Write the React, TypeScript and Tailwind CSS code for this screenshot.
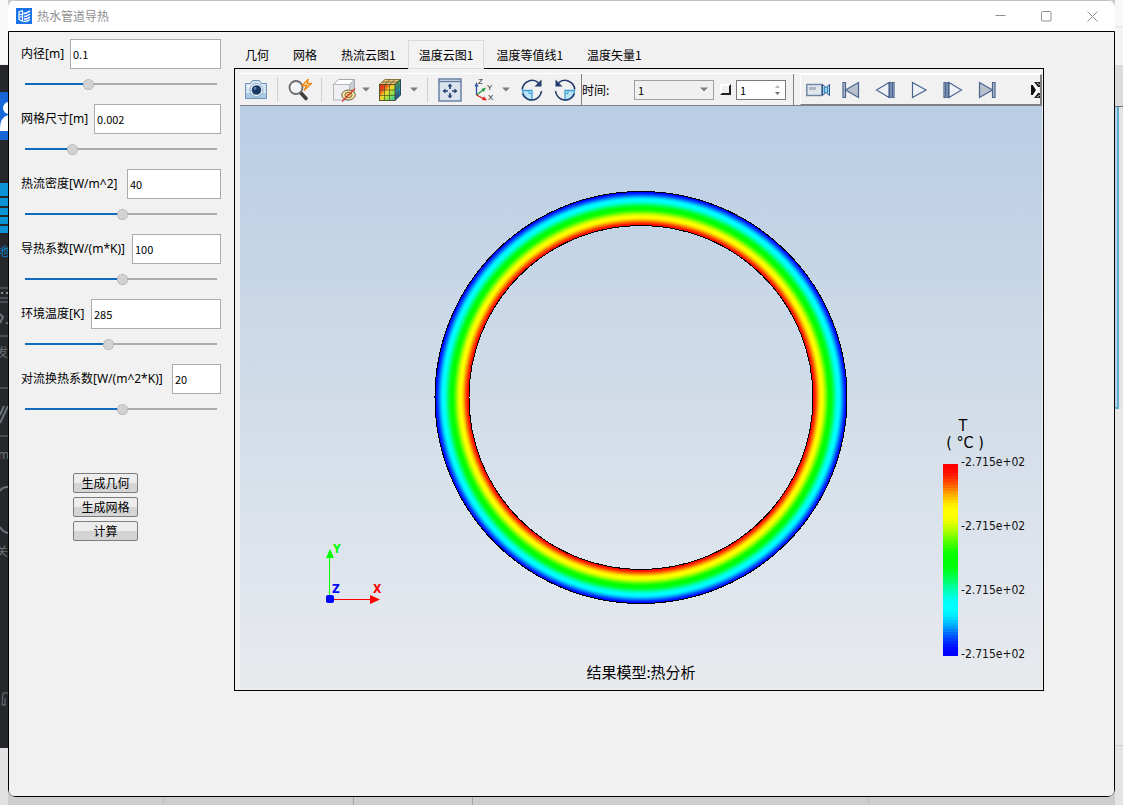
import { useState } from 'react';
import type { ReactNode } from 'react';

interface Param {
  id: string;
  label: string;
  value: string;
  percent: number;
  inputWidth: string;
}

const PARAMS: Param[] = [
  { id: 'inner', label: '内径[m]', value: '0.1', percent: 32, inputWidth: 'w-[151px]' },
  { id: 'mesh', label: '网格尺寸[m]', value: '0.002', percent: 23, inputWidth: 'w-[127px]' },
  { id: 'flux', label: '热流密度[W/m^2]', value: '40', percent: 51, inputWidth: 'w-[94px]' },
  { id: 'conduct', label: '导热系数[W/(m*K)]', value: '100', percent: 51, inputWidth: 'w-[89px]' },
  { id: 'ambient', label: '环境温度[K]', value: '285', percent: 43, inputWidth: 'w-[130px]' },
  { id: 'convect', label: '对流换热系数[W/(m^2*K)]', value: '20', percent: 51, inputWidth: 'w-[49px]' },
];

const TABS = ['几何', '网格', '热流云图1', '温度云图1', '温度等值线1', '温度矢量1'];
const ACTIONS = ['生成几何', '生成网格', '计算'];
const LEGEND = ['-2.715e+02', '-2.715e+02', '-2.715e+02', '-2.715e+02'];

// red -> yellow -> green -> cyan -> blue
const RAMP = [
  [255, 0, 0],
  [255, 255, 0],
  [0, 255, 0],
  [0, 255, 255],
  [0, 0, 255],
];

function rampColor(t: number) {
  const pos = Math.min(Math.max(t, 0), 0.9999) * 4;
  const i = Math.floor(pos);
  const f = pos - i;
  const s = f * f * (3 - 2 * f);
  const [r, g, b] = RAMP[i].map((c, k) => Math.round(c + (RAMP[i + 1][k] - c) * s));
  return `rgb(${r},${g},${b})`;
}

function ParamField({ param }: { param: Param }) {
  const [value, setValue] = useState(param.value);
  const [percent, setPercent] = useState(param.percent);

  return (
    <div className="flex flex-col pb-[19px]">
      <div className="flex items-center">
        <label htmlFor={param.id} className="flex-1 font-['Noto_Sans','Noto_Sans_CJK_SC',sans-serif] whitespace-nowrap">
          {param.label}
        </label>
        <input
          id={param.id}
          type="text"
          value={value}
          onChange={(e) => setValue(e.target.value)}
          className={`${param.inputWidth} h-[30px] border border-[#ababab] bg-white px-0.5 text-[11px] outline-none`}
        />
      </div>
      <input
        type="range"
        aria-label={param.label}
        min={0}
        max={100}
        value={percent}
        onChange={(e) => setPercent(Number(e.target.value))}
        style={{
          backgroundImage: `linear-gradient(to right, #0f6cbd ${percent}%, #ababab ${percent}%)`,
        }}
        className="mx-1 mt-[14px] h-0.5 appearance-none outline-none [&::-webkit-slider-thumb]:h-[11px] [&::-webkit-slider-thumb]:w-[11px] [&::-webkit-slider-thumb]:appearance-none [&::-webkit-slider-thumb]:rounded-full [&::-webkit-slider-thumb]:border [&::-webkit-slider-thumb]:border-dotted [&::-webkit-slider-thumb]:border-[#a0a0a0] [&::-webkit-slider-thumb]:bg-[#d2d2d2]"
      />
    </div>
  );
}

function ToolButton({ label, width, children }: { label: string; width: string; children: ReactNode }) {
  return (
    <button type="button" aria-label={label} className={`${width} flex h-full shrink-0 items-center justify-center`}>
      {children}
    </button>
  );
}

function Caret() {
  return (
    <svg width="8" height="5" viewBox="0 0 8 5">
      <path d="M0 0.5H8L4 4.5Z" fill="#7f7f7f" />
    </svg>
  );
}

function AppLogo() {
  return (
    <svg width="16" height="16" viewBox="0 0 16 16">
      <rect width="16" height="16" fill="#1a73e8" />
      <path
        d="M2.500 4L7 2.500M3 4V11.500L7 13.500M6.500 3V13M3 6.500H6.500M3 9H6.500"
        fill="none"
        stroke="#fff"
        strokeWidth="1.200"
      />
      <path
        d="M7.500 5.500Q10.500 5.500 14 2.800M8 8.500Q11 8.500 14 6M8 11.200Q11 11.200 14 8.800M7.500 13.500Q11 13.800 14 11.500"
        fill="none"
        stroke="#fff"
        strokeWidth="1.500"
      />
    </svg>
  );
}

function CameraIcon() {
  return (
    <svg width="24" height="24" viewBox="0 0 24 24">
      <path d="M1.500 5.500H6.500L8.500 2.500H15.500L17.500 5.500H22.500V20.500H1.500Z" fill="#d5e5f4" stroke="#6f93b8" />
      <path d="M2 15H22V20H2Z" fill="#a9c8e4" />
      <rect x="3" y="7" width="3" height="2" fill="#fff" />
      <circle cx="12.500" cy="12" r="6.500" fill="#f4f8fc" stroke="#8faccb" />
      <circle cx="12.500" cy="12" r="4.800" fill="#1d3a69" />
      <circle cx="11" cy="10.500" r="1.400" fill="#5d80ad" />
    </svg>
  );
}

function MagnifierIcon() {
  return (
    <svg width="24" height="24" viewBox="0 0 24 24">
      <path d="M12.500 14.500L18 20.500" stroke="#3d3d3d" strokeWidth="3.600" strokeLinecap="round" />
      <circle cx="8" cy="9.500" r="6.500" fill="#f0f4f7" stroke="#6b6b6b" strokeWidth="1.800" />
      <path d="M4.500 9Q5 5.800 8 5.600" fill="none" stroke="#fff" strokeWidth="1.500" />
      <path d="M20.500 1L14 7.500H18.500L16 12.500L23.500 5.500H19Z" fill="#ffe7b0" stroke="#ee8a1d" strokeWidth="1.300" />
    </svg>
  );
}

function HiddenCubeIcon() {
  return (
    <svg width="24" height="24" viewBox="0 0 24 24">
      <path d="M1.500 6.500L6.500 1.500H22.500L17.500 6.500Z" fill="#fff" stroke="#a5a9ae" />
      <path d="M17.500 6.500L22.500 1.500V16.500L17.500 22Z" fill="#c9ced4" stroke="#a5a9ae" />
      <rect x="1.500" y="6.500" width="16" height="15.500" fill="#eef0f3" stroke="#b4b8bd" />
      <ellipse cx="16.500" cy="17" rx="6.800" ry="5" fill="#f6e2aa" stroke="#6d6346" />
      <ellipse cx="16.500" cy="17" rx="3.600" ry="2.800" fill="#e0c478" stroke="#8a7441" />
      <path d="M10 23.500L23 10.500" stroke="#dd3a2d" strokeWidth="1.300" />
    </svg>
  );
}

function ContourCubeIcon() {
  return (
    <svg width="24" height="24" viewBox="0 0 24 24">
      <defs>
        <linearGradient id="cubeFront" x1="0" y1="0" x2="1" y2="1">
          <stop offset="0.050" stopColor="#e8261a" />
          <stop offset="0.250" stopColor="#f0481c" />
          <stop offset="0.450" stopColor="#f8d92c" />
          <stop offset="0.700" stopColor="#8be04a" />
          <stop offset="1" stopColor="#21c3de" />
        </linearGradient>
        <linearGradient id="cubeSide" x1="0" y1="0" x2="0" y2="1">
          <stop offset="0" stopColor="#4fae3a" />
          <stop offset="0.500" stopColor="#2396c8" />
          <stop offset="1" stopColor="#1832ab" />
        </linearGradient>
      </defs>
      <path d="M1.500 6.500L7 1.500H22.500L17 6.500Z" fill="#f0c078" stroke="#8a7440" />
      <path d="M17 6.500L22.500 1.500V17L17 22.500Z" fill="url(#cubeSide)" stroke="#234c57" />
      <rect x="1.500" y="6.500" width="15.500" height="16" fill="url(#cubeFront)" stroke="#5d5420" />
      <path
        d="M6.500 6.500V22.500M11.500 6.500V22.500M1.500 12H17L22.500 7M1.500 17.500H17L22.500 12M6.500 6.500L12 1.500M11.500 6.500L17 1.500M4 4H20V20"
        fill="none"
        stroke="#4c5424"
        strokeWidth="0.700"
      />
    </svg>
  );
}

function FitIcon() {
  return (
    <svg width="24" height="24" viewBox="0 0 24 24">
      <rect x="1" y="1" width="22" height="22" fill="#dbe3ee" stroke="#60799e" strokeWidth="1.400" />
      <path d="M1 3.500H23" stroke="#60799e" strokeWidth="1.400" />
      <path d="M12 8V11M12 15V18M7 13H10M14 13H17" stroke="#243f6e" strokeWidth="1.600" />
      <path d="M12 5.500L14.500 8.500H9.500ZM12 20.500L14.500 17.500H9.500ZM4.500 13L7.500 10.500V15.500ZM19.500 13L16.500 10.500V15.500Z" fill="#243f6e" />
    </svg>
  );
}

function AxesIcon() {
  return (
    <svg width="24" height="24" viewBox="0 0 24 24" fontFamily="'Liberation Sans', sans-serif" fontSize="8">
      <path d="M3.500 17V7" stroke="#2c50a5" strokeWidth="1.300" />
      <path d="M3.500 4L5.500 8.500H1.500Z" fill="#2c50a5" />
      <path d="M3.500 17L10 12" stroke="#249a41" strokeWidth="1.300" />
      <path d="M13 9.500L10.800 14L8.300 11Z" fill="#249a41" />
      <path d="M3.500 17L10 20.500" stroke="#dc2020" strokeWidth="1.300" />
      <path d="M14 22.500L9 22L11 18.300Z" fill="#dc2020" />
      <text x="5" y="6" fill="#222">Z</text>
      <text x="14" y="12" fill="#222">Y</text>
      <text x="15" y="22" fill="#222">X</text>
    </svg>
  );
}

function RotateIcon({ flipped }: { flipped?: boolean }) {
  return (
    <svg width="24" height="24" viewBox="0 0 24 24">
      <g transform={flipped ? 'matrix(-1 0 0 1 24 0)' : undefined}>
        <path d="M12 12.500V22A9.500 9.500 0 0 1 2.500 12.500Z" fill="#bfe4f7" stroke="#3da0d2" strokeWidth="1.300" />
        <path d="M9 12.500V15.500H12" fill="none" stroke="#3da0d2" />
        <path d="M18.500 4.800A9.800 9.800 0 0 0 2.300 11.500M2.500 15.500A9.800 9.800 0 0 0 21.500 13" fill="none" stroke="#233c6c" strokeWidth="1.600" />
        <path d="M21.500 1.500V8.500H14.500Z" fill="#233c6c" />
      </g>
    </svg>
  );
}

function CamcorderIcon() {
  return (
    <svg width="24" height="14" viewBox="0 0 24 14">
      <rect x="0.800" y="1.500" width="15" height="11" fill="#dfe5ed" stroke="#6e82a2" strokeWidth="1.400" />
      <rect x="3" y="4" width="7" height="3" fill="#aab4c4" />
      <path d="M16.500 1.500L20 4.500L23.500 1.500V12.500L20 9.500L16.500 12.500Z" fill="#bfe0f3" stroke="#2f568c" />
      <path d="M18.500 4V10M21.500 4V10" stroke="#3593c9" strokeWidth="1.500" />
    </svg>
  );
}

function PlaybackIcon({ kind }: { kind: 'first' | 'back' | 'play' | 'forward' | 'last' }) {
  const mirrored = kind === 'first' || kind === 'back';
  const filled = kind === 'first' || kind === 'last';
  return (
    <svg width="20" height="18" viewBox="0 0 20 18">
      <g
        transform={mirrored ? 'matrix(-1 0 0 1 20 0)' : undefined}
        fill={filled ? '#b9c1cd' : '#eef2f7'}
        stroke="#4a6490"
        strokeWidth="1.200"
      >
        {filled && <path d="M2.500 1.500V16.500L15.500 9ZM15.500 1.500H18V16.500H15.500Z" />}
        {kind === 'play' && <path d="M3.500 1.500V16.500L17 9Z" />}
        {(kind === 'back' || kind === 'forward') && (
          <path d="M1 1.500H2.500V16.500H1ZM4 1.500H5.500V16.500H4ZM6 1.500V16.500L18.500 9Z" />
        )}
      </g>
    </svg>
  );
}

function Toolbar() {
  const [frame, setFrame] = useState(1);
  const divider = 'h-[25px] w-px shrink-0 bg-[#d0d0d0]';

  return (
    <div className="flex h-[33px] border-t border-b border-t-white border-b-[#808080]">
      <div className="flex shrink-0 items-center border-r border-[#808080]">
        <ToolButton label="截图" width="w-8">
          <CameraIcon />
        </ToolButton>
        <div className={`${divider} mx-[5px]`} />
        <ToolButton label="缩放" width="w-[33px]">
          <MagnifierIcon />
        </ToolButton>
        <div className={`${divider} mx-[5px]`} />
        <ToolButton label="隐藏" width="w-[34px]">
          <HiddenCubeIcon />
        </ToolButton>
        <ToolButton label="隐藏选项" width="w-[10px]">
          <Caret />
        </ToolButton>
        <ToolButton label="云图" width="w-[38px]">
          <ContourCubeIcon />
        </ToolButton>
        <ToolButton label="云图选项" width="w-[10px]">
          <Caret />
        </ToolButton>
        <div className={`${divider} mr-1 ml-2`} />
        <ToolButton label="适应窗口" width="w-9">
          <FitIcon />
        </ToolButton>
        <ToolButton label="视角" width="w-[34px]">
          <AxesIcon />
        </ToolButton>
        <ToolButton label="视角选项" width="w-2">
          <Caret />
        </ToolButton>
        <div className="w-[5px]" />
        <ToolButton label="顺时针旋转" width="w-[34px]">
          <RotateIcon />
        </ToolButton>
        <ToolButton label="逆时针旋转" width="w-8">
          <RotateIcon flipped />
        </ToolButton>
      </div>

      <div className="flex w-[212px] shrink-0 items-center border-r border-[#808080]">
        <label htmlFor="time" className="w-[52px]">
          时间:
        </label>
        <div className="relative">
          <select
            id="time"
            className="block h-5 w-20 appearance-none border border-[#a0a0a0] bg-[#f0f0f0] pl-[3px] text-[11px] outline-none"
          >
            <option>1</option>
          </select>
          <span className="pointer-events-none absolute top-[7px] right-1.5">
            <Caret />
          </span>
        </div>
        <input
          type="checkbox"
          aria-label="循环"
          className="ml-1.5 h-[11px] w-[11px] appearance-none border-2 border-t-white border-r-[#222] border-b-[#222] border-l-white bg-[#f0f0f0]"
        />
        <div className="ml-[5px] flex h-5 w-[50px] border border-[#7a7a7a] bg-white">
          <input
            type="text"
            aria-label="帧"
            value={frame}
            onChange={(e) => setFrame(Number(e.target.value) || 1)}
            className="w-full min-w-0 flex-1 pl-[3px] text-[11px] outline-none"
          />
          <div className="flex w-4 flex-col items-center justify-center gap-1">
            <button type="button" aria-label="增加" onClick={() => setFrame(frame + 1)}>
              <svg width="5" height="3" viewBox="0 0 5 3" className="block">
                <path d="M0 3H5L2.500 0Z" fill="#b5b5b5" />
              </svg>
            </button>
            <button type="button" aria-label="减少" onClick={() => setFrame(Math.max(1, frame - 1))}>
              <svg width="5" height="3" viewBox="0 0 5 3" className="block">
                <path d="M0 0H5L2.500 3Z" fill="#6e6e6e" />
              </svg>
            </button>
          </div>
        </div>
      </div>

      <div className="ml-1.5 flex min-w-0 flex-1 items-center border-t border-r-2 border-b border-l border-t-white border-r-[#808080] border-b-[#808080] border-l-white">
        <ToolButton label="录制" width="w-[33px]">
          <CamcorderIcon />
        </ToolButton>
        <ToolButton label="第一帧" width="w-[34px]">
          <PlaybackIcon kind="first" />
        </ToolButton>
        <ToolButton label="上一帧" width="w-[34px]">
          <PlaybackIcon kind="back" />
        </ToolButton>
        <ToolButton label="播放" width="w-[34px]">
          <PlaybackIcon kind="play" />
        </ToolButton>
        <ToolButton label="下一帧" width="w-[34px]">
          <PlaybackIcon kind="forward" />
        </ToolButton>
        <ToolButton label="最后一帧" width="w-[34px]">
          <PlaybackIcon kind="last" />
        </ToolButton>
        <button type="button" aria-label="更多" className="ml-auto">
          <svg width="9" height="16" viewBox="0 0 9 16">
            <path d="M0 3H2L5 8L2 13H0Z" fill="#111" />
            <path d="M3 0H9V5H7ZM3 16H9V11H7Z" fill="#222" />
            <path d="M2 1.500L6.500 8L2 14.500" fill="none" stroke="#fff" strokeWidth="1.600" />
            <path d="M6 1L9 3M6 15L9 13" stroke="#bbb" />
          </svg>
        </button>
      </div>
    </div>
  );
}

const OUTER = 206;
const INNER = 172;
const RING_STOPS = Array.from({ length: 33 }, (_, i) => i / 32);
const BANDS = Array.from({ length: 64 }, (_, i) => i);

function ResultView() {
  return (
    <svg viewBox="0 0 802 583" className="block h-auto w-full" fontFamily="'DejaVu Sans Condensed', 'DejaVu Sans', sans-serif">
      <defs>
        <linearGradient id="sky" x1="0" y1="0" x2="0" y2="1">
          <stop offset="0" stopColor="#b9cde5" />
          <stop offset="0.500" stopColor="#d1dce8" />
          <stop offset="0.800" stopColor="#dfe5ed" />
          <stop offset="1" stopColor="#e8eaed" />
        </linearGradient>
        <radialGradient id="heat" gradientUnits="userSpaceOnUse" cx="401" cy="291.500" r={OUTER}>
          {RING_STOPS.map((t) => (
            <stop key={t} offset={(INNER + (OUTER - INNER) * t) / OUTER} stopColor={rampColor(t)} />
          ))}
        </radialGradient>
      </defs>
      <rect width="802" height="583" fill="url(#sky)" />

      <circle cx="401" cy="291.500" r={(OUTER + INNER) / 2} fill="none" stroke="url(#heat)" strokeWidth={OUTER - INNER} />
      <circle cx="401" cy="291.500" r={OUTER} fill="none" stroke="#000" shapeRendering="crispEdges" />
      <circle cx="401" cy="291.500" r={INNER} fill="none" stroke="#000" shapeRendering="crispEdges" />

      {/* axis triad */}
      <g fontSize="12" fontWeight="bold">
        <path d="M89.500 490V451" stroke="#00ff00" />
        <path d="M90 443L94 452H86Z" fill="#00ff00" />
        <path d="M93 493.500H131" stroke="#ff0000" />
        <path d="M140 493.500L130 489V498Z" fill="#ff0000" />
        <rect x="86" y="489" width="8" height="8" rx="2" fill="#0000ff" />
        <text x="93" y="447" fill="#00ff00">Y</text>
        <text x="92" y="487" fill="#0000ff">Z</text>
        <text x="133" y="487" fill="#ff0000">X</text>
      </g>

      {/* colour legend */}
      <text x="723" y="325" fontSize="16" textAnchor="middle">T</text>
      <text x="725" y="342" fontSize="16" textAnchor="middle">( °C )</text>
      {BANDS.map((i) => (
        <rect
          key={i}
          x="703"
          y={358 + i * 3}
          width="15"
          height="3"
          fill={rampColor(i / 63)}
          shapeRendering="crispEdges"
        />
      ))}
      {LEGEND.map((text, i) => (
        <text key={i} x="721" y={360 + i * 64} fontSize="12" fill="#111">
          {text}
        </text>
      ))}

      <text x="401" y="572" fontSize="15" textAnchor="middle" fontFamily="'Noto Sans CJK SC', sans-serif">
        结果模型:热分析
      </text>
    </svg>
  );
}

function TitleBar() {
  const control = 'flex h-full w-[46px] items-center justify-center';
  return (
    <header className="flex h-[31px] items-center border-t border-[#bfbfbf] bg-white pl-2 text-[#8f8f8f]">
      <AppLogo />
      <h1 className="ml-[5px] flex-1">热水管道导热</h1>
      <button type="button" aria-label="最小化" className={control}>
        <svg width="11" height="11" viewBox="0 0 11 11">
          <path d="M0.500 4.500H10.500" stroke="#8f8f8f" />
        </svg>
      </button>
      <button type="button" aria-label="最大化" className={control}>
        <svg width="11" height="11" viewBox="0 0 11 11">
          <rect x="0.500" y="0.500" width="9.500" height="9.500" rx="1" fill="none" stroke="#8f8f8f" />
        </svg>
      </button>
      <button type="button" aria-label="关闭" className={control}>
        <svg width="11" height="11" viewBox="0 0 11 11">
          <path d="M0.500 0.500L10.500 10.500M10.500 0.500L0.500 10.500" stroke="#8f8f8f" />
        </svg>
      </button>
    </header>
  );
}

// sidebar of the program behind the window
function SidebarEdge() {
  return (
    <div className="flex w-2 shrink-0 flex-col overflow-hidden bg-[#e2e2e2]">
      <div className="h-[65px] border-b border-[#eee] bg-[#f8f8f8]" />
      <svg width="8" height="683" viewBox="0 0 8 683" fontFamily="'Noto Sans CJK SC', sans-serif" fontSize="12">
        <rect width="8" height="683" fill="#26272b" />
        <circle cx="9" cy="51" r="24" transform="translate(-5 0)" fill="#1767d8" />
        <circle cx="9" cy="43" r="6" fill="#fff" />
        <path d="M0 64Q0 52 8 50V66H0Z" fill="#fff" />
        <rect y="118" width="8" height="50" fill="#0a94d6" />
        <path d="M0 132H8M0 142H8M0 151H8M0 160H8" stroke="#26272b" strokeWidth="2" />
        <text x="-3" y="191" fill="#0a84c4">地</text>
        <path d="M0 223H8M0 233H8M0 237H8M0 271H8M0 323H8M0 371H8" stroke="#6b737c" />
        <path d="M1 228H3M6 228H8" stroke="#8a929b" strokeWidth="2" />
        <path d="M0 249L3 252L0 258M6 258H8" fill="none" stroke="#6b737c" strokeWidth="2" />
        <text x="-4" y="292" fill="#69717a">发</text>
        <path d="M0 358L8 341M0 350L4 341" stroke="#6b737c" strokeWidth="2" />
        <text x="-2" y="394" fill="#69717a">m</text>
        <path d="M0 426Q2 422 8 422M0 462Q3 467 8 468" fill="none" stroke="#6b737c" strokeWidth="2" />
        <text x="-4" y="491" fill="#69717a">关</text>
        <path d="M3 628H8M2 640L3 628M2 640H6M5 633V640" fill="none" stroke="#6b737c" />
      </svg>
    </div>
  );
}

function DesktopEdge() {
  return (
    <div className="flex w-2 shrink-0 flex-col overflow-hidden bg-[#e4e4e4]">
      <div className="h-[26px] bg-[#f8f8f8]" />
      <div className="h-[39px] border-t border-[#e4e4e4] bg-[#f4f4f4]" />
      <div className="h-[42px] border-b border-[#707070] bg-[#dcdcdc]" />
      <div className="h-[302px] w-1 border-r-2 border-b-2 border-[#62acd4] bg-[#b5d5e5]" />
      <div className="h-[337px] border-b border-[#d0d0d0] bg-[#e8e8e8]" />
    </div>
  );
}

export default function App() {
  const [tab, setTab] = useState('温度云图1');

  return (
    <div className="flex min-h-screen bg-[#cdcdcd] font-['Noto_Sans_CJK_SC',sans-serif] text-[12px] leading-4 text-black">
      <SidebarEdge />
      <div className="flex min-w-0 flex-1 flex-col">
        <div className="flex flex-1 flex-col overflow-hidden rounded-lg">
          <TitleBar />
          <main className="flex flex-1 rounded-b-md border border-black bg-[#f1f1f1]">
            <aside className="flex w-[225px] shrink-0 flex-col pt-[7px] pr-[13px] pl-3">
              {PARAMS.map((p) => (
                <ParamField key={p.id} param={p} />
              ))}
              <div className="mt-11 ml-[52px] flex w-[65px] flex-col gap-1">
                {ACTIONS.map((text) => (
                  <button
                    key={text}
                    type="button"
                    className="h-5 rounded-[2px] border border-[#7d7d7d] bg-linear-to-b from-[#ededed] from-50% to-[#d4d4d4] to-50%"
                  >
                    {text}
                  </button>
                ))}
              </div>
            </aside>

            <section className="mr-[70px] min-w-0 flex-1 self-start pt-2">
              <div role="tablist" className="-mb-px -ml-px flex h-[29px]">
                {TABS.map((name) => (
                  <button
                    key={name}
                    type="button"
                    role="tab"
                    aria-selected={tab === name}
                    onClick={() => setTab(name)}
                    className={
                      tab === name
                        ? 'relative z-10 border border-[#d9d9d9] bg-[#f3f3f3] px-[10px] whitespace-nowrap'
                        : 'border border-transparent px-[11px] whitespace-nowrap'
                    }
                  >
                    {name}
                  </button>
                ))}
              </div>
              <div className="border border-black pt-1 pr-px pb-px pl-[5px]">
                <Toolbar />
                <ResultView />
              </div>
            </section>
          </main>
        </div>
        <div className="flex h-2 shrink-0">
          <div className="w-[156px] border-r border-[#bdbdbd]" />
          <div className="w-[190px] border-r border-[#a5a5a5]" />
          <div className="w-[119px] border-r border-[#a5a5a5]" />
          <div className="w-[396px] border-r border-[#bdbdbd]" />
        </div>
      </div>
      <DesktopEdge />
    </div>
  );
}
